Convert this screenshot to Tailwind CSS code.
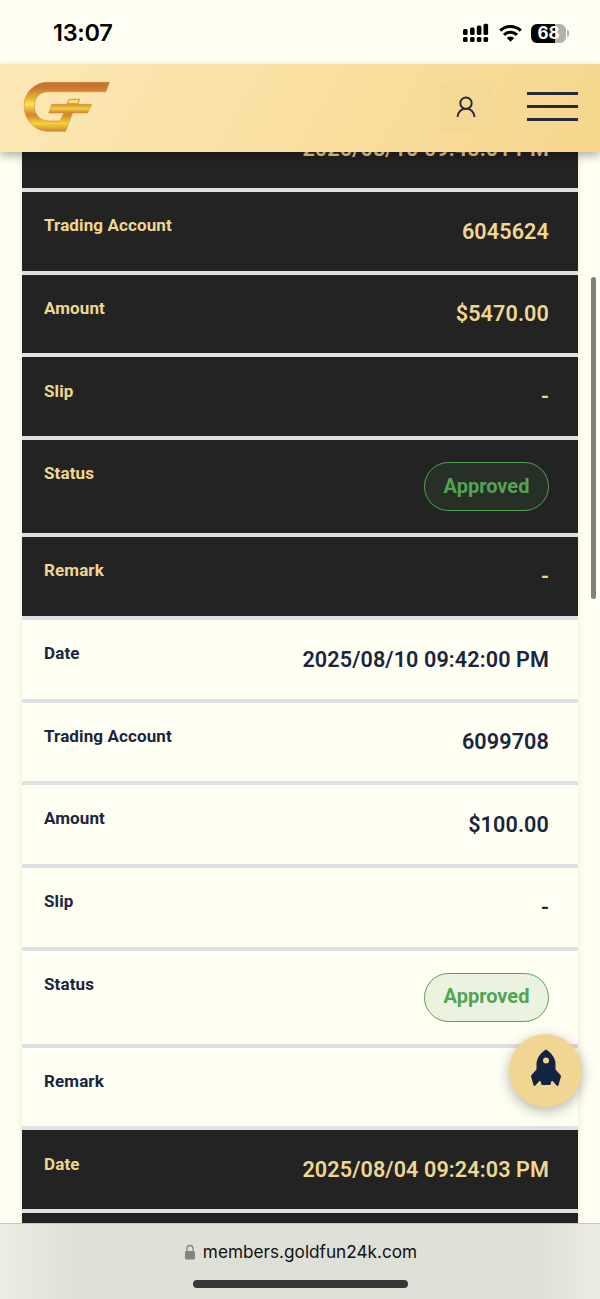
<!DOCTYPE html>
<html lang="en">
<head>
<meta charset="utf-8">
<title>Transactions</title>
<script src="https://cdn.jsdelivr.net/npm/@tailwindcss/browser@4"></script>
</head>
<body class="bg-[#fffff3]">
<div class="relative flex h-[1299px] w-[600px] flex-col overflow-hidden bg-[#fffff3] font-[Roboto,sans-serif]">
  <div class="flex h-16 shrink-0 items-center justify-between pt-0.5 pr-[34px] pl-[53px]">
    <div class="font-[Inter,sans-serif] text-[23.5px] font-semibold tracking-[-0.3px] text-black">13:07</div>
    <div class="flex items-center">
      <svg class="mr-[10px]" width="26" height="20" viewBox="0 0 26 20" fill="#000"><rect x="0" y="6" width="4.6" height="6" rx="1.5"/><rect x="7" y="4.500" width="4.600" height="7.500" rx="1.500"/><rect x="13.800" y="2.500" width="4.600" height="9.500" rx="1.500"/><rect x="20.500" y="0.700" width="4.600" height="11.300" rx="1.500"/><rect x="0" y="14" width="4.600" height="5" rx="1.500"/><rect x="7" y="14" width="4.600" height="5" rx="1.500"/><rect x="13.800" y="14" width="4.600" height="5" rx="1.500"/><rect x="20.500" y="14" width="4.600" height="5" rx="1.500"/></svg>
      <svg class="mr-[9px]" width="23" height="18" viewBox="0 0 23 18" fill="none" stroke="#000" stroke-width="3"><path d="M1.200 6.700a14.800 14.800 0 0 1 20.600 0"/><path d="M5 10.800a9.500 9.500 0 0 1 13 0"/><path d="M7.800 14a5.300 5.300 0 0 1 7.400 0l-3.700 3.700z" fill="#000" stroke="none"/></svg>
      <div class="relative flex h-[19px] w-[35px] items-center justify-center rounded-[6px] bg-[linear-gradient(90deg,#000_68%,#b3b3aa_68%)] pt-px font-[Inter,sans-serif] text-[17px] leading-[19px] font-bold text-white">68<span class="absolute top-[6px] -right-[3px] h-[7px] w-[2px] rounded-r-full bg-[#b3b3aa]"></span></div>
    </div>
  </div>

  <header class="relative z-10 flex h-22 shrink-0 items-center bg-linear-[120deg,#fce8b6,#f7d68c] pr-[22px] pl-[22px] shadow-[0_4px_9px_rgba(0,0,0,0.3)]">
    <svg class="mt-[-2px]" width="90" height="54" viewBox="22 80 90 54">
      <defs>
        <linearGradient id="gold" x1="0" y1="82" x2="0" y2="132" gradientUnits="userSpaceOnUse"><stop offset="0" stop-color="#c4702f"/><stop offset=".13" stop-color="#cb7a30"/><stop offset=".3" stop-color="#e6ab31"/><stop offset=".44" stop-color="#fbe351"/><stop offset=".66" stop-color="#d3852c"/><stop offset=".83" stop-color="#f6d334"/><stop offset="1" stop-color="#c98131"/></linearGradient>
        <linearGradient id="bar" x1="0" y1="0" x2="0" y2="1"><stop offset="0" stop-color="#ce842f"/><stop offset=".55" stop-color="#f4ce3b"/><stop offset="1" stop-color="#cd8030"/></linearGradient>
      </defs>
      <path d="M109.500 82.300H48C34 82.300 24.200 93 24.200 105.500C24.200 121 35.500 131.300 49 131.300H65.500L72.500 113H64L60 121H49C40 121 34.300 114.500 34.300 106C34.300 97.500 39.500 91.800 48 91.800H105.700Z" fill="url(#gold)" stroke="#c57a32" stroke-width=".5"/>
      <path d="M69 99.300H79.500L77.800 105H67Z" fill="#f7e36e" stroke="#bd7931" stroke-width=".8"/>
      <path d="M51.500 104.300H67L68.200 103.500H77.500L77.300 104.300H92L87.500 113H48.700Z" fill="url(#bar)" stroke="#c9842f" stroke-width=".4"/>
    </svg>
    <div class="mt-[-3px] mr-[36px] ml-auto flex size-[51px] items-center justify-center rounded-[6px] bg-[#f4d896]">
      <svg width="20" height="22" viewBox="0 0 20 22" fill="none" stroke="#23283a" stroke-width="1.900"><circle cx="10" cy="7.200" r="5.700"/><path d="M1.500 21C2 9.800 18 9.800 18.500 21"/></svg>
    </div>
    <div class="mt-[-3px] flex w-[51px] flex-col gap-[10px]"><div class="h-[3px] bg-[#24293b]"></div><div class="h-[3px] bg-[#24293b]"></div><div class="h-[3px] bg-[#24293b]"></div></div>
  </header>

  <main class="min-h-0 flex-1 overflow-hidden px-[22px]">
    <div id="records" class="-mt-[42.6px] shadow-[0_0_8px_rgba(180,150,80,0.2)]"></div>
  </main>

  <div class="absolute top-[277px] right-[4px] h-[322px] w-[5px] rounded-full bg-[#80807a]"></div>

  <div class="absolute top-[1034px] left-[509px] flex size-[73px] items-center justify-center rounded-full bg-[#f1d592] shadow-[0_4px_14px_rgba(0,0,0,0.3)]">
    <svg class="mt-[-6px]" width="32" height="38" viewBox="0 0 32 38" fill="#14233f"><path fill-rule="evenodd" d="M16 .5C11 3.500 6.500 9 6.500 15V20.500L1.500 26Q.8 27 1.200 28.200L3.600 36.300Q4.200 37.800 5.300 36.500L9.500 32Q11 31.700 11 33.500Q11 36 12.500 36H19.500Q21 36 21 33.500Q21 31.700 22.500 32L26.700 36.500Q27.800 37.800 28.400 36.300L30.800 28.200Q31.200 27 30.500 26L25.500 20.500V15C25.500 9 21 3.500 16 .5ZM16 8.600A3 3 0 1 1 16 14.600A3 3 0 1 1 16 8.600Z"/></svg>
  </div>

  <footer class="relative flex h-[76px] shrink-0 flex-col items-center border-t border-[#c9c9c1] bg-linear-[90deg,#edede3,#e0e0d7_12%,#dedfd6_50%,#e0e0d7_90%,#ecece2]">
    <div class="mt-[16px] flex h-6 items-center gap-[8px] pl-[2px] text-[#111]">
      <svg width="10" height="16" viewBox="0 0 10 16"><path d="M2 8V4.500a3 3 0 0 1 6 0V8" fill="none" stroke="#85857f" stroke-width="1.300"/><rect y="7" width="10" height="8.500" rx="1.500" fill="#85857f"/></svg>
      <span class="font-[Inter,sans-serif] text-[17.2px]">members.goldfun24k.com</span>
    </div>
    <div class="mt-[16px] h-[8px] w-[215px] rounded-full bg-[#373737]"></div>
  </footer>
</div>
<script>
const rows = [
  ['Date', '2025/08/10 09:48:01 PM', 1], ['Trading Account', '6045624', 1], ['Amount', '$5470.00', 1], ['Slip', '-', 1], ['Status', 'Approved', 1], ['Remark', '-', 1],
  ['Date', '2025/08/10 09:42:00 PM', 0], ['Trading Account', '6099708', 0], ['Amount', '$100.00', 0], ['Slip', '-', 0], ['Status', 'Approved', 0], ['Remark', '-', 0],
  ['Date', '2025/08/04 09:24:03 PM', 1], ['Trading Account', '6099708', 1]
];
document.getElementById('records').innerHTML = rows.map(([label, value, dark]) => {
  const tone = dark ? 'bg-[#232323] text-[#f0d690]' : 'bg-[#fffff3] text-[#1a2540]';
  const size = label === 'Status' ? 'h-[97.1px]' : 'h-[82.7px]';
  const badge = dark ? 'bg-[#272f27]' : 'bg-[#ebf3e0]';
  const val = label === 'Status'
    ? `<span class="mt-[22px] flex h-[49px] w-[125px] items-center justify-center rounded-full border-[1.5px] border-[#52a352] pb-[2px] text-[20px] font-bold text-[#52a352] ${badge}">${value}</span>`
    : `<span class="mt-[25.7px] h-[27px] text-[21.6px] leading-[27px] font-semibold tracking-[0.1px]">${value}</span>`;
  return `<div class="flex justify-between border-b-[4px] border-[#dfe0e5] pr-[29px] pl-[22px] ${size} ${tone}"><span class="mt-[23.1px] h-5 text-[17px] leading-5 font-bold tracking-[0.12px]">${label}</span>${val}</div>`;
}).join('');
</script>
</body>
</html>
